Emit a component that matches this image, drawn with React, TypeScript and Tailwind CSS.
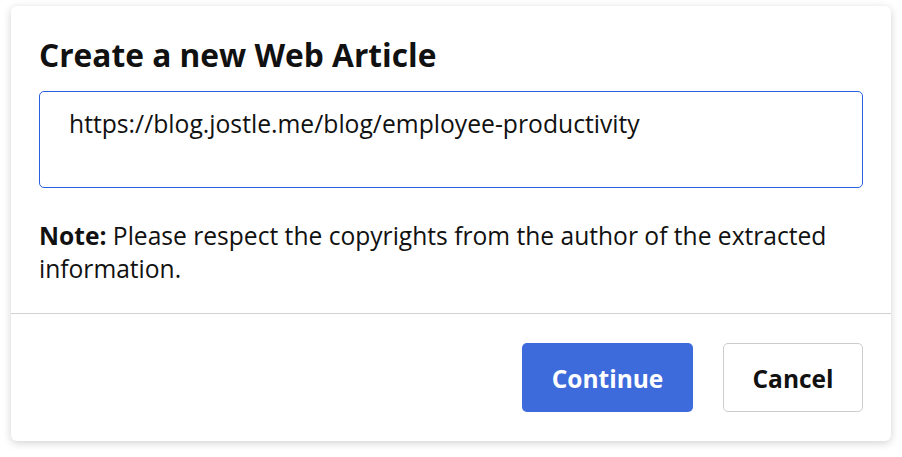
import React from 'react';

const App: React.FC = () => {
  return (
    <div className="w-[902px] h-[457px] bg-white pt-[6px] pl-[11px]" style={{ fontFamily: '"Open Sans", sans-serif' }}>
      <div className="w-[880px] h-[435px] bg-white rounded-[6px] shadow-[0_2px_8px_rgba(0,0,0,0.18)] flex flex-col">
        <div className="px-[28px] pt-[29px] flex flex-col">
          <h1 className="text-[31.7px] leading-[40px] font-bold text-[#111]">Create a new Web Article</h1>
          <div className="mt-[16px] h-[97px] border-[1.5px] border-[#2a5fe0] rounded-[5px] pl-[29px] pt-[15px]">
            <span className="text-[24.7px] leading-[33px] text-[#111]">https://blog.jostle.me/blog/employee-productivity</span>
          </div>
          <p className="mt-[31px] text-[24.6px] leading-[33px] text-[#111]">
            <strong className="font-bold">Note:</strong> Please respect the copyrights from the author of the extracted information.
          </p>
        </div>
        <div className="mt-[28px] border-t border-[#d2d2d2]" />
        <div className="flex justify-end gap-[30px] px-[28px] pt-[29px]">
          <button className="w-[171px] h-[69px] rounded-[5px] bg-[#3e6bdb] text-white text-[24.5px] font-bold pt-[3px]">Continue</button>
          <button className="w-[140px] h-[69px] rounded-[5px] border border-[#cccccc] bg-white text-[#111] text-[24.5px] font-bold pt-[3px]">Cancel</button>
        </div>
      </div>
    </div>
  );
};

export default App;
